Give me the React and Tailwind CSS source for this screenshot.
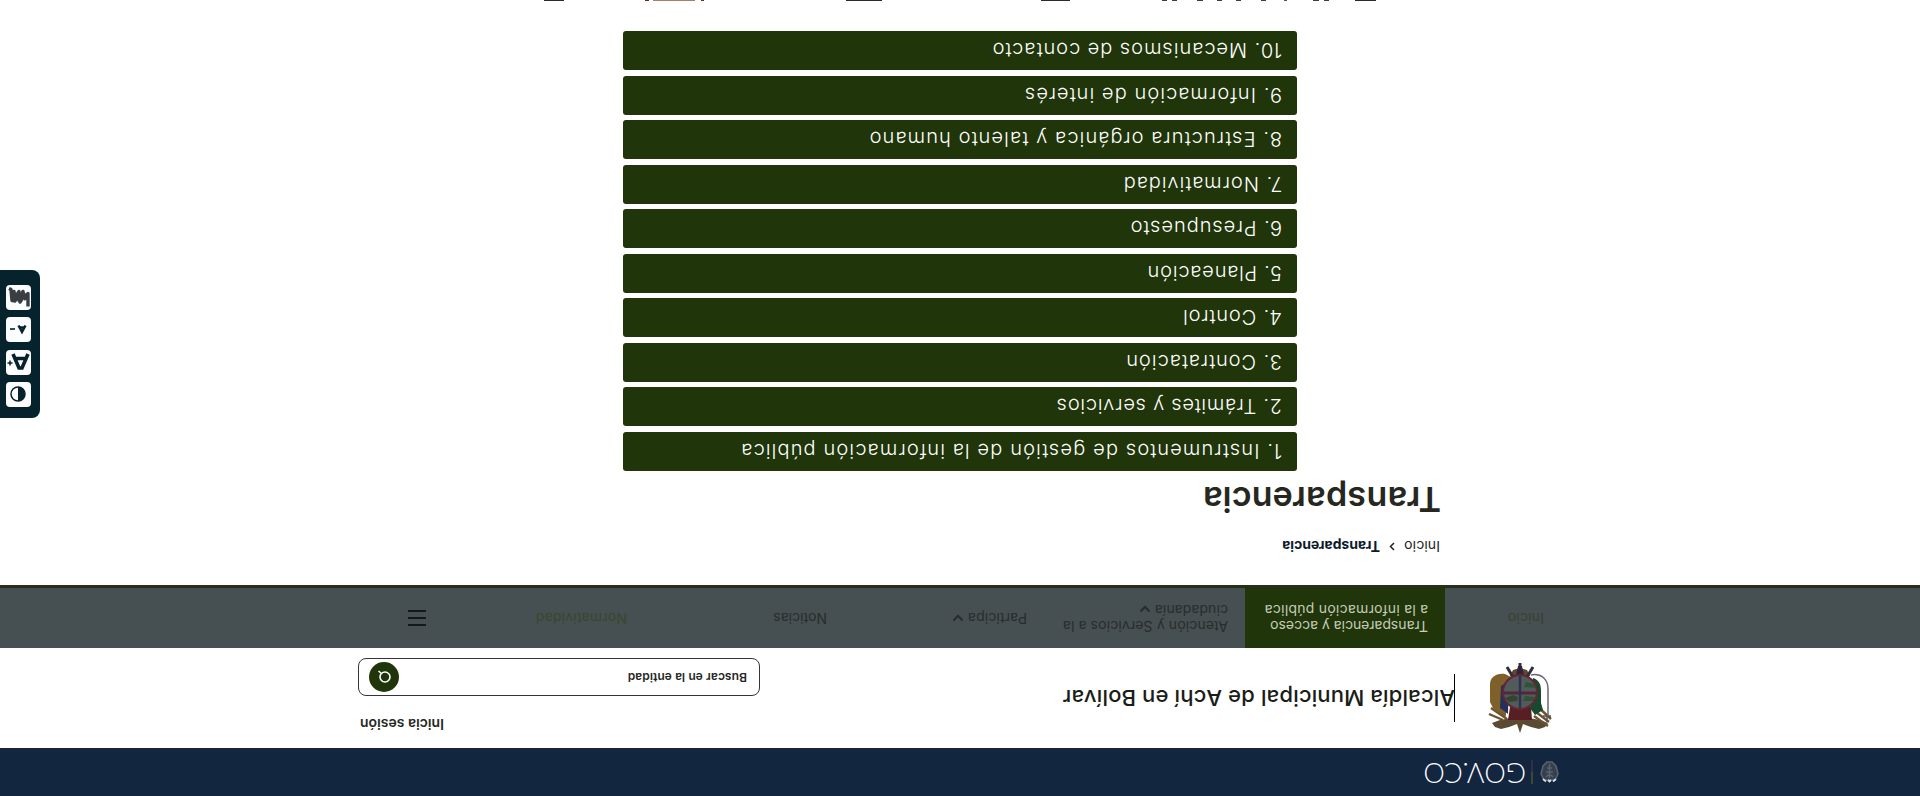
const items = [
  ['1. Instrumentos de gestión de la información pública', 'tracking-[1.140px]'],
  ['2. Trámites y servicios', 'tracking-[0.750px]'],
  ['3. Contratación', 'tracking-[1px]'],
  ['4. Control', 'tracking-[0.900px]'],
  ['5. Planeación', 'tracking-[0.800px]'],
  ['6. Presupuesto', 'tracking-[0.950px]'],
  ['7. Normatividad', 'tracking-[1px]'],
  ['8. Estructura orgánica y talento humano', 'tracking-[1.120px]'],
  ['9. Información de interés', 'tracking-[1.090px]'],
  ['10. Mecanismos de contacto', 'tracking-[0.980px]'],
];

function Chevron({ className }) {
  return (
    <svg className={className} width="12" height="8" viewBox="0 0 12 8" fill="none" stroke="currentColor" strokeWidth="2">
      <path d="M1.500 1.500 6 6.200 10.500 1.500" />
    </svg>
  );
}

function Crest() {
  return (
    <svg width="66" height="72" viewBox="0 0 66 72" fill="none">
      <path d="M33 1l3 9 8-3 8-2 6 2 3 4-8 3-11 2-9-1-9 1-11-2-8-3 3-4 6-2 8 2 8 3z" fill="#5b4a33" />
      <path d="M21 14h24l-2 13H22z" fill="#571f24" />
      <path d="M46 15 62 26M48 17l12 13M50 14l14 6M19 18 5 8M17 22 4 12M15 27 2 15" stroke="#6b5530" strokeWidth="2.400" />
      <path d="M2 18h8M6 12v8" stroke="#55524f" strokeWidth="1.500" />
      <path d="M5 18v27c0 10 7 16 17 14" stroke="#6b6870" strokeWidth="1.500" />
      <path d="M47 18l12 6 4 8v17c0 8-6 12-15 11l-8-4 7-22z" fill="#80602a" />
      <path d="M45 20l8 6-1 22-8 5z" fill="#24305c" />
      <path d="M20 56c-6-2-8-6-8-13V31l-2-7 8-5 5 7z" fill="#17492d" />
      <path d="M23 58l10-4 10 4-3 6-7 2-7-2z" fill="#5d482d" />
      <path d="M33 56v15M46 67l-6-10M20 67l6-10" stroke="#352e39" strokeWidth="3" />
      <path d="M29 58l2 10h4l2-10z" fill="#30233e" />
      <circle cx="33" cy="42" r="17" fill="#525b5b" />
      <path d="M36 33l8-1 4 4-8 3-5-2z" fill="#30472f" />
      <path d="M19 33h11l-2 5-10-1zM18 46l11 1-2 5-8-2z" fill="#315239" />
      <path d="M17 41h32" stroke="#53273a" strokeWidth="3" />
      <path d="M33 26v32" stroke="#30304f" strokeWidth="2.500" />
      <circle cx="33" cy="42" r="17" stroke="#642536" strokeWidth="2" />
    </svg>
  );
}

function Shield() {
  return (
    <svg width="19" height="22" viewBox="0 0 19 22" fill="none" stroke="#59626f">
      <path d="M4 3h11l3 6-2 8-4 4H7l-4-4L1 9z" fill="#36404d" strokeWidth="1.500" />
      <path d="M6 6c2 3 5 3 7 0M6 11h7M7 15h5M9.500 5v14" strokeWidth="1.500" />
      <path d="M3 4 6 1.500M16 4l-3-2.500M8 3l1.500-1.500L11 3" stroke="#d7dce2" strokeWidth="1.800" />
    </svg>
  );
}

function Tool({ children }) {
  return <div className="flex h-[25px] w-[25px] items-center justify-center rounded bg-[#fbfdfe] text-[#06222c]">{children}</div>;
}

function AccessBar() {
  return (
    <aside className="absolute right-0 top-[378px] flex h-[148px] w-10 flex-col gap-[7.300px] rounded-l-lg bg-[#06222c] pl-[9px] pt-[11px]">
      <Tool>
        <svg width="16" height="16" viewBox="0 0 16 16">
          <circle cx="8" cy="8" r="7" fill="none" stroke="currentColor" strokeWidth="1.500" />
          <path d="M8 1a7 7 0 0 0 0 14z" fill="currentColor" />
        </svg>
      </Tool>
      <Tool>
        <svg width="23" height="18" viewBox="0 0 23 18" fill="none" stroke="currentColor">
          <path d="M2 17 8 3h3l6 14M5 12.500h9" strokeWidth="3.600" />
          <path d="M17.500 8h5M20 5.500v5" strokeWidth="1.500" />
        </svg>
      </Tool>
      <Tool>
        <svg width="18" height="12" viewBox="0 0 18 12" fill="none" stroke="currentColor">
          <path d="M1.500 10.500 5 4l3.500 6.500M3 8.500h4" strokeWidth="2.400" />
          <path d="M12 7h5" strokeWidth="1.600" />
        </svg>
      </Tool>
      <Tool>
        <svg width="23" height="21" viewBox="0 0 23 21" fill="none" stroke="#3a3d42" strokeLinejoin="round" strokeWidth="3.400">
          <path d="M2 1.500v13l4-3 1 5 4-9v9l4-6 1 6 2-9 1 11 2 1M4 8l2 4 4-6 2 6 3-5 4 1" />
        </svg>
      </Tool>
    </aside>
  );
}

function NextSection() {
  return (
    <div className="absolute bottom-0 left-[544px] flex h-px w-[832px] items-stretch">
      <i className="w-[21px] bg-[#2b2b2d]" />
      <i className="ml-[26px] w-[5px] bg-[#3d3d3d]" />
      <i className="ml-[5px] w-[6px] bg-[#3d3d3d]" />
      <i className="ml-[26px] w-[3px] bg-[#555]" />
      <i className="ml-[18px] w-[5px] bg-[#3d3d3d]" />
      <i className="ml-[20px] w-[5px] bg-[#3d3d3d]" />
      <i className="ml-[14px] w-[5px] bg-[#3d3d3d]" />
      <i className="ml-[14px] w-[6px] bg-[#3d3d3d]" />
      <i className="ml-[20px] w-[5px] bg-[#3d3d3d]" />
      <i className="ml-[5px] w-[5px] bg-[#3d3d3d]" />
      <i className="ml-[92px] w-[29px] bg-[#2b2b2d]" />
      <i className="ml-[159px] w-[36px] bg-[#2b2b2d]" />
      <i className="ml-[142px] w-[3px] bg-[#5a3a2a]" />
      <i className="ml-[6px] w-[42px] bg-[#a67f66]" />
      <i className="ml-[4px] w-[4px] bg-[#4b3429]" />
      <i className="ml-auto w-[20px] bg-[#2b2b2d]" />
    </div>
  );
}

export default function App() {
  return (
    <div className="relative h-[796px] w-[1920px] rotate-180 overflow-hidden bg-white font-['Inter','Liberation_Sans',sans-serif] text-[#26281f]">
      <div className="flex h-12 items-center bg-[#12263f] pl-[361px] text-white">
        <Shield />
        <div className="ml-[7px] flex h-6 w-[2px] flex-col">
          <i className="h-3 bg-[#3a4a35]" />
          <i className="h-3 bg-[#3a2c41]" />
        </div>
        <span className="-mt-[4px] ml-[5px] font-['Lato','Liberation_Sans',sans-serif] text-[27px] font-light leading-none tracking-[0.300px]">GOV.CO</span>
      </div>

      <header className="flex h-[100px]">
        <div className="flex w-[465px] pl-[367px] pt-[14px]"><Crest /></div>
        <div className="mt-[26px] flex h-12 items-center border-l border-black">
          <h1 className="-ml-px whitespace-nowrap text-[22px] font-medium tracking-[0.140px] text-[#1b1d18]">Alcaldía Municipal de Achí en Bolívar</h1>
        </div>
        <div className="ml-auto mr-[358px] w-[402px] pt-[14px]">
          <div className="flex justify-end pr-[2px] text-[14px] font-semibold leading-5">Inicia sesión</div>
          <div className="mt-[18px] flex h-[38px] items-center justify-between rounded-lg border border-[#33353a] pl-3 pr-[10px]">
            <span className="text-xs font-semibold tracking-[0.080px]">Buscar en la entidad</span>
            <span className="flex h-[30px] w-[30px] items-center justify-center rounded-full bg-[#203509]">
              <svg width="14" height="14" viewBox="0 0 14 14" fill="none" stroke="white" strokeWidth="1.600">
                <circle cx="6" cy="7" r="5" />
                <path d="m9.500 10.500 3 2.500" />
              </svg>
            </span>
          </div>
        </div>
      </header>

      <nav className="flex h-[63px] border-b-[3px] border-[#25301a] bg-[#464f52] text-[14px] leading-4 text-[#282d2c]">
        <div className="flex w-[475px] items-center pl-[376px] tracking-[0.200px] text-[#38422e]">Inicio</div>
        <div className="flex w-[200px] items-center bg-[#203509] pl-[17px] text-[#c5cdb9]">
          <span className="whitespace-nowrap">Transparencia y acceso<br /><span className="tracking-[0.250px]">a la información pública</span></span>
        </div>
        <div className="flex w-[218px] items-center pl-[17px]">
          <span className="whitespace-nowrap tracking-[0.120px]">Atención y Servicios a la<br />ciudadanía <Chevron className="inline" /></span>
        </div>
        <div className="flex w-[200px] items-center tracking-[0.100px]">Participa <Chevron className="ml-1" /></div>
        <div className="flex w-[200px] items-center">Noticias</div>
        <div className="flex w-[201px] items-center tracking-[0.200px] text-[#38482b]">Normatividad</div>
        <div className="flex flex-col justify-center gap-[5px]">
          <i className="h-[2px] w-[18px] bg-[#16191a]" />
          <i className="h-[2px] w-[18px] bg-[#16191a]" />
          <i className="h-[2px] w-[18px] bg-[#16191a]" />
        </div>
      </nav>

      <main>
        <div className="mt-[28px] flex h-5 items-center pl-[480px] text-[14px] text-[#222]">
          <span className="tracking-[0.150px]">Inicio</span>
          <svg className="mx-[9px]" width="6" height="9" viewBox="0 0 6 9" fill="none" stroke="currentColor" strokeWidth="1.500"><path d="m1 1 3.500 3.500L1 8" /></svg>
          <span className="font-bold tracking-[-0.060px] text-[#0d1b2c]">Transparencia</span>
        </div>
        <h2 className="ml-[479px] mt-[15px] h-[51px] text-[34px] font-semibold leading-[46px] tracking-[0.200px]">Transparencia</h2>
        <ul className="ml-[623px] flex w-[674px] flex-col gap-[5.550px]">
          {items.map(([label, tracking]) => (
            <li key={label} className="flex h-[39px] items-center rounded-[3px] bg-[#203509] pl-[15px] pt-px text-[20px] font-light text-white">
              <span className={tracking}>{label}</span>
            </li>
          ))}
        </ul>
      </main>

      <NextSection />
      <AccessBar />
    </div>
  );
}
